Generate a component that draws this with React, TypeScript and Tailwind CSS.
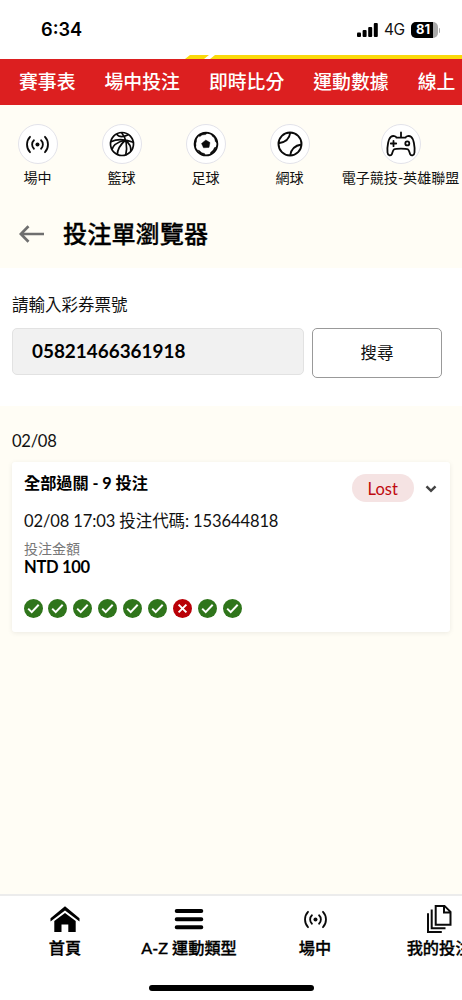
import React from 'react';

const LiveIcon = ({ className }: { className?: string }) => (
  <svg viewBox="0 0 24 24" className={className} fill="none" stroke="#0a0a0a" strokeWidth="1.9" strokeLinecap="round">
    <circle cx="12" cy="12" r="2.1" fill="#0a0a0a" stroke="none" />
    <path d="M8.3 7.6a6 6 0 0 0 0 8.8M15.700 7.600a6 6 0 0 1 0 8.800M4.200 4C0 8.400 0 15.600 4.200 20M19.800 4c4.200 4.400 4.200 11.600 0 16" />
  </svg>
);

const BasketballIcon = () => (
  <svg viewBox="0 0 28 28" className="size-7" fill="none" stroke="#0a0a0a" strokeWidth="1.700">
    <circle cx="14" cy="14" r="11.500" />
    <path d="M8.500 4C10.500 6.800 15 7.400 20.300 4.800M13.500 2.500C18 8 19.500 17 17.700 25.300M2.800 11.700C10 8.300 18 9.300 25.300 12.300M16.700 10C10 12 5 15 4 19.500M17 10.500C12 15 9.500 20 9.300 24.500M17.500 10.500C21 13 23.200 17 22.800 21" />
  </svg>
);

const SoccerIcon = () => (
  <svg viewBox="0 0 28 28" className="size-7" fill="none" stroke="#0a0a0a" strokeWidth="1.800">
    <circle cx="14" cy="14" r="11.400" />
    <path d="M13.800 10l4.200 2.600-1 4.800-5.500.4-2-4.300z" fill="#0a0a0a" strokeWidth=".4" />
    <path
      d="M6.700 5.200l4.200-2.300 4.300.2-1.500 1.400-3.700.5-2.300 1.700zM20 4.500l3.700 4 1.300 4.200-1.600-1-.9-3.700-2.500-2zM24.400 17l-2.500 4.500-3.700 2.500.3-1.600 2.700-2.400 1.300-2.400zM13 25l-4.500-1.500-3-3.400 1.800.5 2.600 2.200 2.600.7zM3.200 17.300l-.5-4.500 1.500-4.200.4 2.400-.8 2.600.2 2.200z"
      fill="#0a0a0a"
      strokeWidth=".4"
    />
  </svg>
);

const TennisIcon = () => (
  <svg viewBox="0 0 28 28" className="size-7" fill="none" stroke="#0a0a0a" strokeWidth="1.900">
    <circle cx="14" cy="14" r="11.500" />
    <path d="M14.300 2.500C13.500 9 9 12.500 2.600 13.300M25.500 14.500C19 15.500 15 19 14.200 25.500" />
  </svg>
);

const GamepadIcon = () => (
  <svg viewBox="0 0 30 28" className="h-7 w-[30px]" fill="none" stroke="#0a0a0a" strokeWidth="1.800" strokeLinecap="round" strokeLinejoin="round">
    <path d="M15 2.500v5M10.500 7.700h9c.5-1.700 3.700-2.300 5.500-1 2.600 1.900 4 9.500 3.500 15.800-.2 3.300-3.600 3.800-4.500 1.400-.6-1.600-.7-3.600-2.200-4.600-1.900-1-11.700-1-13.600 0-1.500 1-1.600 3-2.200 4.600-.9 2.400-4.300 1.900-4.500-1.400C1 16.200 2.400 8.600 5 6.700c1.800-1.300 5-.7 5.500 1M7.500 10.800v5.400M4.800 13.500h5.400" />
    <circle cx="21.300" cy="13.400" r="2" />
  </svg>
);

const HomeIcon = () => (
  <svg viewBox="0 0 30 28" className="h-7 w-[30px]" fill="#000">
    <path d="M15 1.200L.5 13.200v3.200L15 5.600l14.500 10.800v-3.200z" />
    <path d="M15 8L4.300 16v11h7.200v-7.500h6.800V27h7.400V16z" />
  </svg>
);

const PagesIcon = () => (
  <svg viewBox="0 0 28 30" className="h-[30px] w-7" fill="none" stroke="#0a0a0a" strokeWidth="2">
    <path d="M10.700 1.900h8.800l6 6v12.800H10.700zM19 2v6.500h6.500M6.700 5.500v18.800h13.800M3 9.200v18.900h13.800" />
  </svg>
);

const sports = [
  { label: '場中', icon: <LiveIcon className="size-[23px]" /> },
  { label: '籃球', icon: <BasketballIcon /> },
  { label: '足球', icon: <SoccerIcon /> },
  { label: '網球', icon: <TennisIcon /> },
  { label: '電子競技-英雄聯盟', icon: <GamepadIcon /> },
];

const tabs = [
  { label: '首頁', icon: <HomeIcon /> },
  {
    label: 'A-Z 運動類型',
    icon: (
      <svg viewBox="0 0 30 28" className="h-7 w-[30px]" stroke="#000" strokeWidth="4" strokeLinecap="round">
        <path d="M2.700 6h24.600M2.700 14.200h24.600M2.700 22.300h24.600" />
      </svg>
    ),
  },
  { label: '場中', icon: <LiveIcon className="size-[23px]" /> },
  { label: '我的投注', icon: <PagesIcon /> },
];

const results = [true, true, true, true, true, true, false, true, true];

export default function App() {
  return (
    <div lang="zh-Hant" className="flex h-[1000px] w-[462px] flex-col overflow-hidden bg-[#fffdf5] font-['Lato','Noto_Sans_CJK_TC',sans-serif] text-[#111]">
      <header className="flex h-[59px] shrink-0 flex-col justify-between bg-white">
        <div className="flex h-[55px] items-center justify-between pt-[5px] pr-[22px] pl-[41px] font-['Inter',sans-serif]">
          <span className="text-[18.200px] font-semibold text-black">6:34</span>
          <div className="flex items-center">
            <svg viewBox="0 0 21 14" className="mr-[6px] h-3.5 w-[21px]">
              <rect x="0" y="9.500" width="4" height="4.500" rx="1" />
              <rect x="5.600" y="7" width="4" height="7" rx="1" />
              <rect x="11.200" y="4" width="4" height="10" rx="1" />
              <rect x="16.800" y="0" width="4" height="14" rx="1" />
            </svg>
            <span className="mr-[6px] text-[15.500px] tracking-[-0.500px]">4G</span>
            <div className="flex h-[15.500px] w-[27px] items-center overflow-hidden rounded-[5px] bg-[#aaa]">
              <span className="flex h-full w-[22px] items-center justify-center bg-black pl-[3px] text-[13px] font-bold text-white">81</span>
            </div>
            <span className="ml-px h-[5px] w-[1.500px] rounded-r bg-[#aaa]" />
          </div>
        </div>
        <svg viewBox="0 0 462 4" className="h-1 w-full" fill="#fad90a">
          <path d="M185 4l5-4h19l-5 4zM210 4l5-4h247v4z" />
        </svg>
      </header>

      <nav className="flex h-[46px] shrink-0 items-center gap-[29px] overflow-hidden bg-[#dc1f20] pl-[19px] text-[18.850px] font-medium whitespace-nowrap text-white">
        <span>賽事表</span>
        <span>場中投注</span>
        <span>即時比分</span>
        <span>運動數據</span>
        <span>線上</span>
      </nav>

      <div className="grid h-[103px] shrink-0 grid-cols-[75px_93px_75px_93px_129px] pt-[19px]">
        {sports.map((s) => (
          <div key={s.label} className="flex flex-col items-center">
            <div className="flex size-10 items-center justify-center rounded-full border border-[#e3e3ea] bg-white">{s.icon}</div>
            <span className="mt-1 text-[14.050px] leading-5 whitespace-nowrap">{s.label}</span>
          </div>
        ))}
      </div>

      <div className="flex h-[60px] shrink-0 items-center gap-[18px] pb-[8px] pl-[19px]">
        <svg viewBox="0 0 26 18" className="h-[18px] w-[26px]" fill="none" stroke="#6f6f6f" strokeWidth="2.700">
          <path d="M25 9H2M9.500 1.300L1.800 9l7.700 7.700" />
        </svg>
        <h1 className="text-[24.200px] leading-8 font-medium text-black [-webkit-text-stroke:0.300px_black]">投注單瀏覽器</h1>
      </div>

      <section className="h-[138px] shrink-0 bg-white px-3 pt-6">
        <label className="block h-9 pt-px text-[16.500px] leading-6">請輸入彩券票號</label>
        <div className="flex items-start gap-2">
          <div className="flex h-[47px] w-[292px] items-center rounded-[5px] border border-[#e2e2e2] bg-[#f1f1f1] pl-[19px] text-[18.900px] font-bold text-black">05821466361918</div>
          <button className="h-[50px] w-[130px] rounded-[5px] border border-[#999] bg-white text-[16.500px]">搜尋</button>
        </div>
      </section>

      <main className="flex-1 px-3 pt-[23px]">
        <div className="h-[33px] text-[16.600px] leading-6 tracking-[-0.300px]">02/08</div>
        <article className="relative h-[170px] w-[438px] rounded-[3px] bg-white px-3 pt-[9px] shadow-[0_1px_5px_rgba(0,0,0,0.08)]">
          <div className="text-[16.200px] leading-6 font-bold tracking-[-0.050px] text-black">全部過關 - 9 投注</div>
          <div className="absolute top-[12px] right-[13px] flex items-center gap-[11px]">
            <span className="flex h-[28px] w-[62.500px] items-center justify-center rounded-full bg-[#f5e3e3] pt-[2px] text-[16.500px] text-[#bf0a0f]">Lost</span>
            <svg viewBox="0 0 12 8" className="mt-0.5 h-2 w-3" fill="none" stroke="#444" strokeWidth="2.500">
              <path d="M1.500 1.300L6 5.800l4.500-4.500" />
            </svg>
          </div>
          <div className="mt-[14px] text-[16.550px] leading-6 tracking-[-0.120px]">02/08 17:03 投注代碼: 153644818</div>
          <div className="mt-[6px] text-[14px] leading-5 text-[#777]">投注金額</div>
          <div className="text-[16.550px] leading-[17px] font-bold tracking-[-0.300px] text-black">NTD 100</div>
          <div className="mt-[23px] -ml-[0.500px] flex gap-[5.900px]">
            {results.map((won, i) => (
              <svg key={i} viewBox="0 0 19 19" className="size-[19px]" fill="none" stroke="#fff" strokeWidth="2">
                <circle cx="9.500" cy="9.500" r="9.500" fill={won ? '#2f751b' : '#b90007'} stroke="none" />
                <path d={won ? 'M4.200 9.600l3.500 3.500 7-7.300' : 'M5.600 5.600l7.800 7.800M13.400 5.600l-7.800 7.800'} />
              </svg>
            ))}
          </div>
        </article>
      </main>

      <footer className="flex h-[106px] shrink-0 flex-col border-t-2 border-[#ececec] bg-white">
        <div className="grid h-[89px] grid-cols-[130px_118px_134px_114px] pt-[8px]">
          {tabs.map((t) => (
            <div key={t.label} className="flex flex-col items-center">
              <div className="flex h-[30px] items-center justify-center">{t.icon}</div>
              <span className="mt-[2px] text-[16.200px] leading-6 font-medium whitespace-nowrap text-black [-webkit-text-stroke:0.300px_black]">{t.label}</span>
            </div>
          ))}
        </div>
        <div className="ml-[149px] h-[6px] w-[165px] shrink-0 rounded-full bg-black" />
      </footer>
    </div>
  );
}
